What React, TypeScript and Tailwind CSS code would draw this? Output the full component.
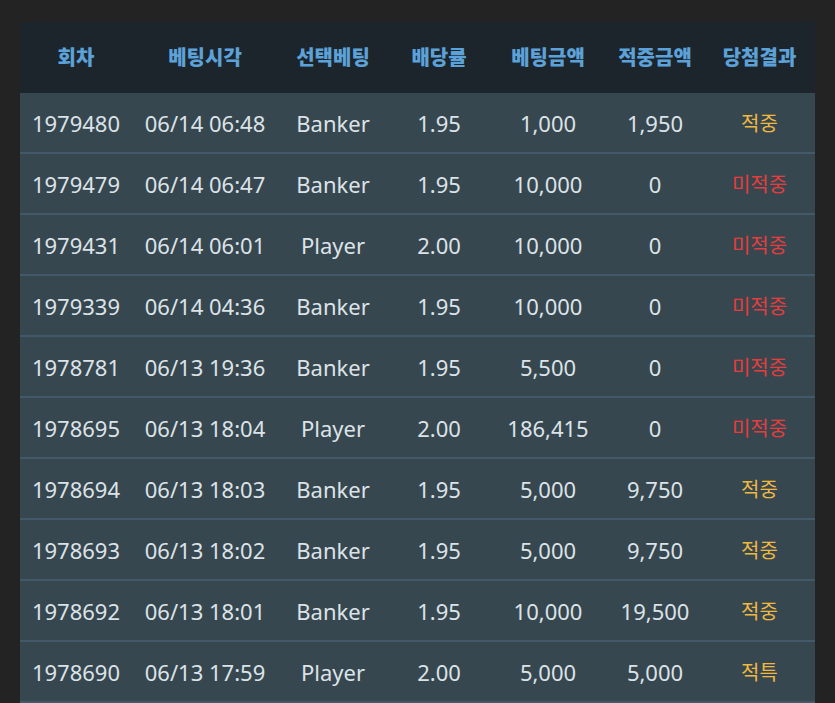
const rows = [
  { no: "1979480", time: "06/14 06:48", pick: "Banker", odds: "1.95", bet: "1,000", win: "1,950", result: "적중" },
  { no: "1979479", time: "06/14 06:47", pick: "Banker", odds: "1.95", bet: "10,000", win: "0", result: "미적중" },
  { no: "1979431", time: "06/14 06:01", pick: "Player", odds: "2.00", bet: "10,000", win: "0", result: "미적중" },
  { no: "1979339", time: "06/14 04:36", pick: "Banker", odds: "1.95", bet: "10,000", win: "0", result: "미적중" },
  { no: "1978781", time: "06/13 19:36", pick: "Banker", odds: "1.95", bet: "5,500", win: "0", result: "미적중" },
  { no: "1978695", time: "06/13 18:04", pick: "Player", odds: "2.00", bet: "186,415", win: "0", result: "미적중" },
  { no: "1978694", time: "06/13 18:03", pick: "Banker", odds: "1.95", bet: "5,000", win: "9,750", result: "적중" },
  { no: "1978693", time: "06/13 18:02", pick: "Banker", odds: "1.95", bet: "5,000", win: "9,750", result: "적중" },
  { no: "1978692", time: "06/13 18:01", pick: "Banker", odds: "1.95", bet: "10,000", win: "19,500", result: "적중" },
  { no: "1978690", time: "06/13 17:59", pick: "Player", odds: "2.00", bet: "5,000", win: "5,000", result: "적특" },
];

const headers = ["회차", "베팅시각", "선택베팅", "배당률", "베팅금액", "적중금액", "당첨결과"];

const cols = "grid grid-cols-[112px_146px_110px_102px_116px_98px_111px]";

const BetHistory = () => {
  return (
    <div className="min-h-[703px] bg-[#232323] pt-[22px] px-[20px] font-['Noto_Sans','Noto_Sans_CJK_KR',sans-serif]">
      <div className="w-[795px] h-[681px] overflow-hidden">
        <div className={`${cols} h-[71px] items-center bg-[#1c252c] text-[20px] font-black text-[#5ca2d8]`}>
          {headers.map((h) => (
            <div key={h} className="text-center">{h}</div>
          ))}
        </div>
        {rows.map((r) => (
          <div
            key={r.no}
            className={`${cols} h-[61px] pt-[2px] items-center bg-[#37474f] border-b-2 border-[#42596a] text-[22px] text-[#dce3e8]`}
          >
            <div className="text-center">{r.no}</div>
            <div className="text-center">{r.time}</div>
            <div className="text-center">{r.pick}</div>
            <div className="text-center">{r.odds}</div>
            <div className="text-center">{r.bet}</div>
            <div className="text-center">{r.win}</div>
            <div className={`text-center text-[20px] ${r.result === "미적중" ? "text-[#e53d3d]" : "text-[#efb841]"}`}>
              {r.result}
            </div>
          </div>
        ))}
      </div>
    </div>
  );
};

export default function App() {
  return <BetHistory />;
}
